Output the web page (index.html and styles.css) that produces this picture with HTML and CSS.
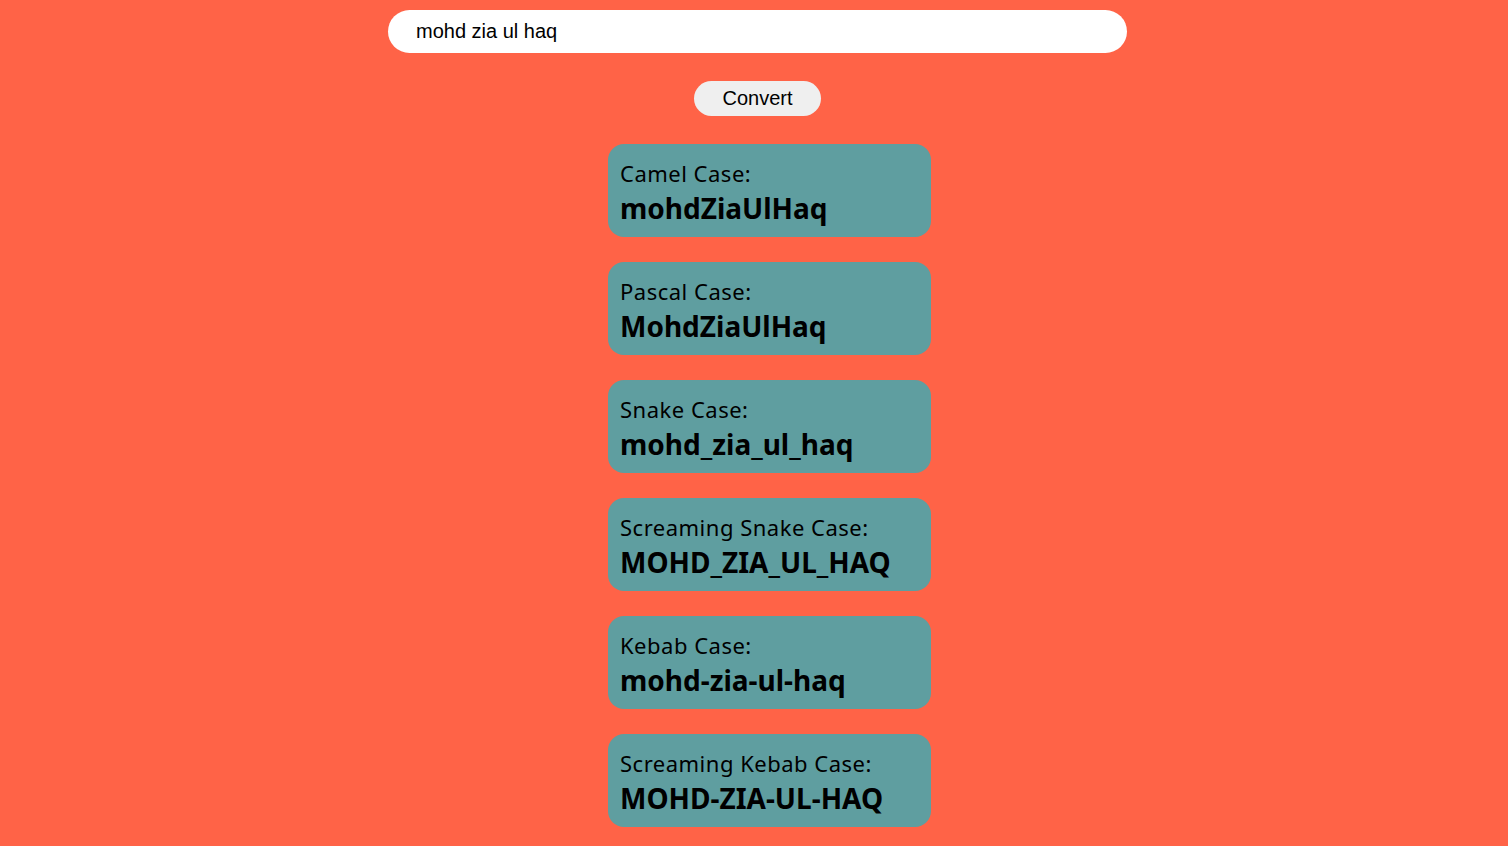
FILE: index.html
```html
<!DOCTYPE html>
<html>
<head>
<meta charset="utf-8">
<link rel="stylesheet" href="styles.css">
</head>
<body>
<div class="page">
  <div class="form">
    <input class="text-input" type="text" value="mohd zia ul haq">
    <button class="convert-btn">Convert</button>
  </div>
  <div class="results">
    <div class="card"><div class="label">Camel Case:</div><div class="value">mohdZiaUlHaq</div></div>
    <div class="card"><div class="label">Pascal Case:</div><div class="value">MohdZiaUlHaq</div></div>
    <div class="card"><div class="label">Snake Case:</div><div class="value">mohd_zia_ul_haq</div></div>
    <div class="card"><div class="label">Screaming Snake Case:</div><div class="value">MOHD_ZIA_UL_HAQ</div></div>
    <div class="card"><div class="label">Kebab Case:</div><div class="value">mohd-zia-ul-haq</div></div>
    <div class="card"><div class="label">Screaming Kebab Case:</div><div class="value">MOHD-ZIA-UL-HAQ</div></div>
  </div>
</div>
</body>
</html>
```
FILE: styles.css
```css
html, body {
  margin: 0;
  padding: 0;
  background: #ff6347;
  height: 100%;
  overflow: hidden;
}
.page {
  display: flex;
  flex-direction: column;
  align-items: center;
  padding-top: 10px;
}
.form {
  display: flex;
  flex-direction: column;
  align-items: center;
  padding-left: 7px;
  gap: 28px;
}
.text-input {
  box-sizing: border-box;
  width: 739px;
  height: 43px;
  border: none;
  outline: none;
  border-radius: 22px;
  background: #fff;
  padding: 0 28px;
  font-family: "Liberation Sans", Arial, sans-serif;
  font-size: 20px;
  color: #000;
}
.convert-btn {
  box-sizing: border-box;
  width: 127px;
  height: 35px;
  border: none;
  border-radius: 18px;
  background: #efefef;
  font-family: "Liberation Sans", Arial, sans-serif;
  font-size: 20px;
  color: #000;
  padding: 0;
}
.results {
  display: flex;
  flex-direction: column;
  gap: 25px;
  margin-top: 28px;
  padding-left: 31px;
}
.card {
  box-sizing: border-box;
  width: 323px;
  height: 93px;
  background: #5f9ea0;
  border-radius: 16px;
  padding: 14px 12px 0;
  font-family: "Noto Sans", "Open Sans", sans-serif;
  color: #000;
}
.label {
  font-size: 22px;
  letter-spacing: 0.5px;
  line-height: 30px;
}
.value {
  font-size: 28px;
  font-weight: bold;
  line-height: 40px;
}
```
